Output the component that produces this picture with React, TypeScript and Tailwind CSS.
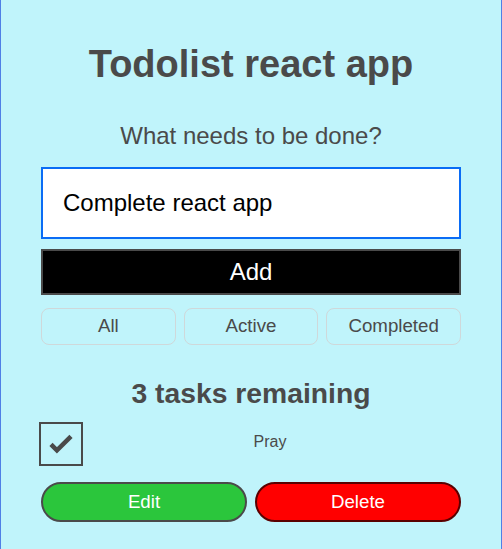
import { useState } from 'react';

type Filter = 'All' | 'Active' | 'Completed';

export default function App() {
  const [text, setText] = useState('Complete react app');
  const [filter, setFilter] = useState<Filter>('All');
  const [done, setDone] = useState(true);

  return (
    <div
      className="min-h-screen bg-[#c0f4fb] border-x border-[#4f7fe6] px-10 pt-[43px] pb-10 text-[#4a4a4a]"
      style={{ fontFamily: '"Liberation Sans", Arial, sans-serif' }}
    >
      <h1 className="text-center font-bold text-[38px] leading-[43px]">Todolist react app</h1>

      <form className="mt-9 flex flex-col" onSubmit={(e) => e.preventDefault()}>
        <label htmlFor="new-todo" className="text-center text-[24px] leading-[28px]">
          What needs to be done?
        </label>
        <input
          id="new-todo"
          type="text"
          value={text}
          onChange={(e) => setText(e.target.value)}
          className="mt-[17px] h-[72px] w-full border-2 border-[#0a6cf5] bg-white px-5 text-[24px] text-black outline-none"
        />
        <button
          type="submit"
          className="mt-[10px] h-[46px] w-full border-2 border-[#4a4a4a] bg-black text-[24px] text-white"
        >
          Add
        </button>
      </form>

      {/* Filters */}
      <div className="mt-[13px] grid grid-cols-3 gap-2">
        {(['All', 'Active', 'Completed'] as Filter[]).map((f) => (
          <button
            key={f}
            onClick={() => setFilter(f)}
            className="h-[37px] rounded-lg border border-[#cfd8da] text-[18.7px] text-[#4a4a4a]"
          >
            {f}
          </button>
        ))}
      </div>

      <h2 className="mt-[32px] text-center font-bold text-[28.3px] leading-[32px]">3 tasks remaining</h2>

      {/* Todo item */}
      <div className="mt-[13px] flex items-start">
        <button
          onClick={() => setDone(!done)}
          className="-ml-[2px] h-[44px] w-[44px] shrink-0 border-2 border-[#4a4a4a]"
        >
          {done && (
            <svg viewBox="0 0 44 44" className="h-full w-full">
              <polyline
                points="11,22.5 17.5,29 33,13.5"
                fill="none"
                stroke="#4a4a4a"
                strokeWidth="5"
              />
            </svg>
          )}
        </button>
        <span className="flex-1 -translate-x-[2px] pt-[11px] text-center text-[16px] leading-[18px]">Pray</span>
      </div>

      <div className="mt-4 grid grid-cols-2 gap-2">
        <button className="h-[40px] rounded-full border-2 border-[#4a4a4a] bg-[#2bc63c] text-[18.7px] text-white">
          Edit
        </button>
        <button className="h-[40px] rounded-full border-2 border-[#5a0000] bg-[#ff0000] text-[18.7px] text-white">
          Delete
        </button>
      </div>
    </div>
  );
}
